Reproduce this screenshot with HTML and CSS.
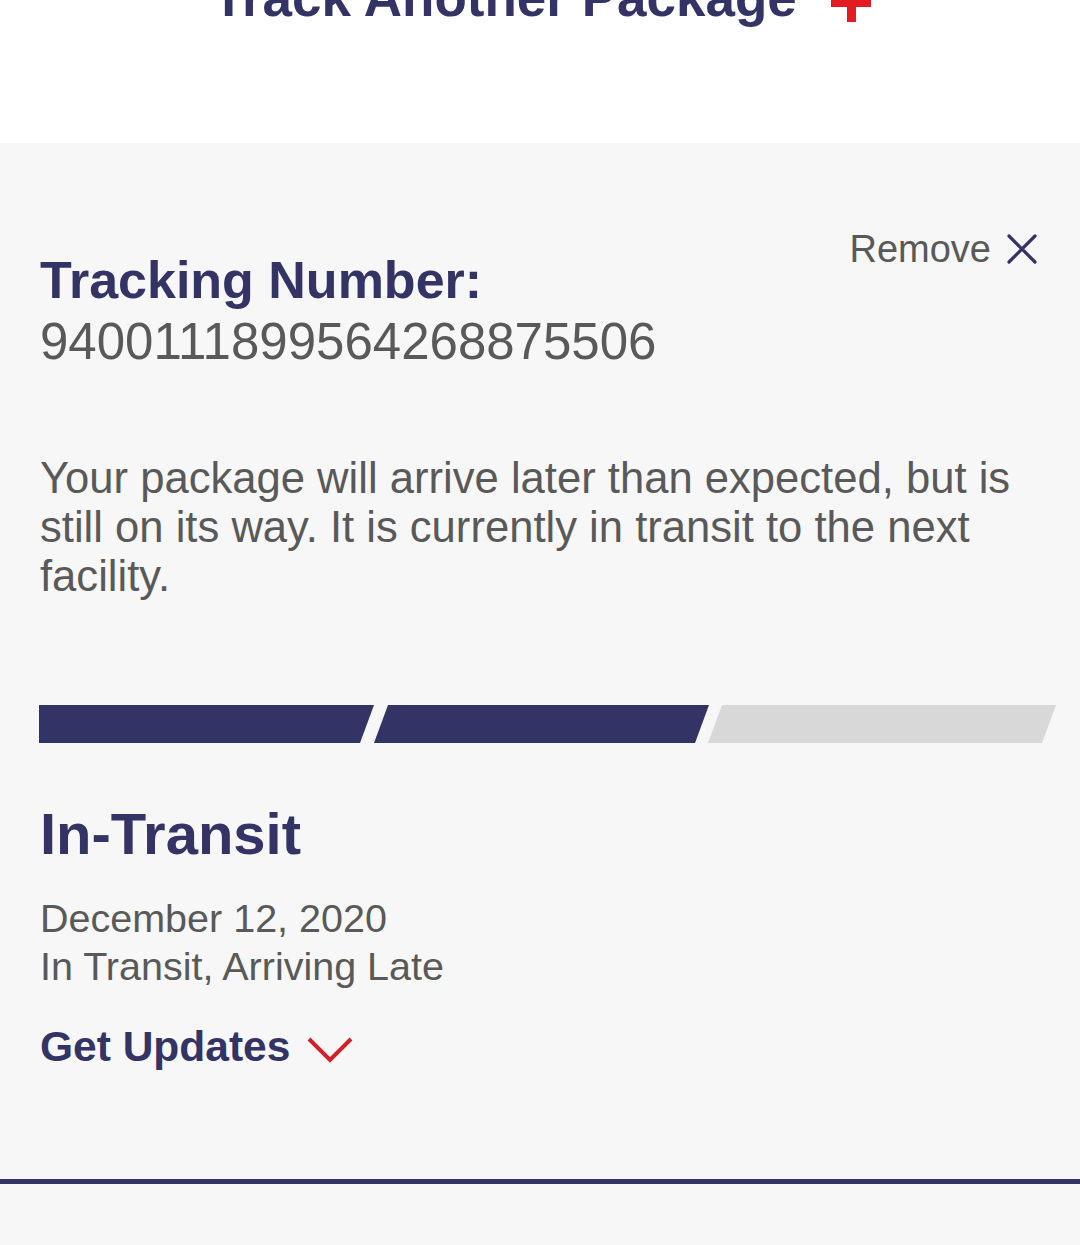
FILE: index.html
```html
<!DOCTYPE html>
<html lang="en">
<head>
    <meta charset="UTF-8">
    <meta name="viewport" content="width=device-width, initial-scale=1.0">
    <title>USPS Tracking</title>
    <link rel="stylesheet" href="styles.css">
</head>
<body>
    <!-- Track another package header -->
    <div class="track-another">
        <p class="track-title">Track Another Package <span class="plus"></span></p>
    </div>

    <!-- Tracking result card -->
    <div class="result">
        <div class="result-top">
            <div class="tracking-info">
                <h2 class="tracking-label">Tracking Number:</h2>
                <p class="tracking-number">9400111899564268875506</p>
            </div>
            <button class="remove-btn">
                Remove
                <svg class="remove-icon" width="30" height="30" viewBox="0 0 30 30">
                    <path d="M2 2 L28 28 M28 2 L2 28" stroke="#333366" stroke-width="3.2" fill="none" stroke-linecap="round"/>
                </svg>
            </button>
        </div>

        <p class="status-text">Your package will arrive later than expected, but is still on its way. It is currently in transit to the next facility.</p>

        <!-- Progress bar -->
        <svg class="progress" width="1017" height="38" viewBox="0 0 1017 38">
            <polygon points="0,0 335,0 321,38 0,38" fill="#333366"/>
            <polygon points="349,0 670,0 656,38 335,38" fill="#333366"/>
            <polygon points="683,0 1017,0 1003,38 669,38" fill="#d8d8d8"/>
        </svg>

        <h3 class="status-title">In-Transit</h3>
        <p class="status-detail">December 12, 2020<br>In Transit, Arriving Late</p>

        <button class="updates-btn">
            Get Updates
            <svg class="chevron" width="48" height="30" viewBox="0 0 48 30">
                <path d="M3 4 L24 25 L45 4" stroke="#d5202a" stroke-width="4" fill="none"/>
            </svg>
        </button>
    </div>

    <div class="divider"></div>
    <div class="after"></div>
</body>
</html>
```

FILE: styles.css
```css
body {
    margin: 0;
    background-color: #f7f7f7;
    font-family: 'Liberation Sans', Arial, sans-serif;
    overflow: hidden;
}

.track-another {
    display: flow-root;
    background-color: #ffffff;
    height: 143px;
    text-align: center;
}

.track-title {
    margin: -28px 0 0 0;
    padding-left: 4px;
    font-size: 53px;
    line-height: 52px;
    font-weight: bold;
    color: #333366;
}

.plus {
    display: inline-block;
    position: relative;
    width: 40px;
    height: 40px;
    margin-left: 20px;
    vertical-align: -6px;
}

.plus::before,
.plus::after {
    content: "";
    position: absolute;
    background-color: #e31c23;
}

.plus::before {
    left: 0;
    right: 0;
    top: 16px;
    height: 9px;
}

.plus::after {
    top: 0;
    bottom: 0;
    left: 16px;
    width: 9px;
}

.result {
    padding: 84px 40px 0 40px;
    height: 1036px;
    box-sizing: border-box;
}

.result-top {
    display: flex;
    justify-content: space-between;
    align-items: flex-start;
}

.tracking-label {
    margin: 23px 0 0 0;
    font-size: 52px;
    line-height: 60px;
    color: #333366;
}

.tracking-number {
    margin: 4px 0 0 0;
    font-size: 51px;
    line-height: 56px;
    color: #595959;
}

.remove-btn {
    display: flex;
    align-items: center;
    gap: 16px;
    margin-right: 3px;
    padding: 0;
    background: none;
    border: none;
    font-family: inherit;
    font-size: 38px;
    line-height: 44px;
    color: #595959;
    cursor: pointer;
}

.remove-icon {
    width: 30px;
    height: 30px;
}

.status-text {
    margin: 84px 0 0 0;
    font-size: 43.6px;
    line-height: 49px;
    color: #595959;
}

.progress {
    display: block;
    margin: 104px 0 0 -1px;
}

.status-title {
    margin: 58px 0 0 0;
    font-size: 58px;
    line-height: 66px;
    color: #333366;
}

.status-detail {
    margin: 27px 0 0 0;
    font-size: 39.5px;
    line-height: 48px;
    color: #595959;
}

.updates-btn {
    display: flex;
    align-items: center;
    gap: 16px;
    margin-top: 32px;
    padding: 0;
    background: none;
    border: none;
    font-family: inherit;
    font-size: 42.5px;
    line-height: 50px;
    font-weight: bold;
    color: #333366;
    cursor: pointer;
}

.chevron {
    margin-top: 6px;
}

.divider {
    height: 5px;
    background-color: #333366;
}
```
